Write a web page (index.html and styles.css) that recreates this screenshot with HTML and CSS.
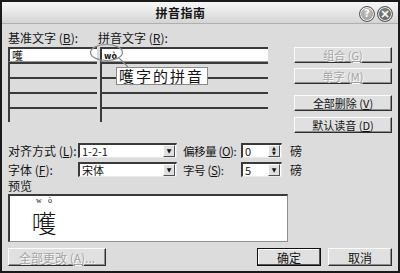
FILE: index.html
```html
<!DOCTYPE html>
<html lang="zh-CN">
<head>
  <meta charset="UTF-8" />
  <title>拼音指南</title>
  <link rel="stylesheet" href="styles.css">
</head>
<body>
  <div class="window">
    <div class="titlebar">
      <div class="title">拼音指南</div>
      <div class="title-buttons">
        <span class="tb-btn help">?</span>
        <span class="tb-btn close">×</span>
      </div>
    </div>

    <div class="content">
      <div class="top">
        <div class="pinyin-table">
          <div class="col-label">基准文字 (<u>B</u>):</div>
          <div class="col-label col-right">拼音文字 (<u>R</u>):</div>
          <div class="cell active base">嚄</div>
          <div class="cell active pinyin">wò</div>
          <div class="cell"></div>
          <div class="cell"></div>
          <div class="cell"></div>
          <div class="cell"></div>
          <div class="cell"></div>
          <div class="cell"></div>
          <div class="cell"></div>
          <div class="cell"></div>

          <!-- note drawn over the table -->
          <svg class="mark" width="260" height="92" viewBox="0 0 260 92">
            <ellipse cx="98.5" cy="21.5" rx="16" ry="8" fill="none" stroke="#8a8a8a" stroke-width="1.2" />
            <line x1="111" y1="27" x2="120" y2="36" stroke="#8a8a8a" stroke-width="1.2" />
          </svg>
          <div class="callout">嚄字的拼音</div>
        </div>

        <div class="side-buttons">
          <button class="btn" disabled>组合 (<u>G</u>)</button>
          <button class="btn btn-single" disabled>单字 (<u>M</u>)</button>
          <button class="btn btn-clear">全部删除 (<u>V</u>)</button>
          <button class="btn btn-default-read">默认读音 (<u>D</u>)</button>
        </div>
      </div>

      <div class="options">
        <div class="opt-row">
          <span class="opt-label">对齐方式 (<u>L</u>):</span>
          <div class="combo wide"><span class="combo-text">1-2-1</span><span class="drop">▼</span></div>
          <span class="opt-label second">偏移量 (<u>O</u>):</span>
          <div class="combo narrow"><span class="combo-text">0</span><span class="spin"><i>▲</i><i>▼</i></span></div>
          <span class="unit">磅</span>
        </div>
        <div class="opt-row">
          <span class="opt-label">字体 (<u>F</u>):</span>
          <div class="combo wide"><span class="combo-text">宋体</span><span class="drop">▼</span></div>
          <span class="opt-label second">字号 (<u>S</u>):</span>
          <div class="combo narrow"><span class="combo-text">5</span><span class="drop">▼</span></div>
          <span class="unit">磅</span>
        </div>
      </div>

      <div class="preview-label">预览</div>
      <div class="preview">
        <div class="sample">
          <span class="sample-py">w ò</span>
          <span class="sample-char">嚄</span>
        </div>
      </div>

      <div class="bottom">
        <button class="btn btn-all" disabled>全部更改 (<u>A</u>)...</button>
        <button class="btn btn-ok">确定</button>
        <button class="btn btn-cancel">取消</button>
      </div>
    </div>
  </div>
</body>
</html>
```

FILE: styles.css
```css
* {
  margin: 0;
  padding: 0;
  box-sizing: border-box;
}

body {
  width: 400px;
  height: 273px;
  background: #dcdcdc;
  font-family: "Noto Sans CJK SC", sans-serif;
  font-size: 12px;
  color: #151515;
  overflow: hidden;
}

u {
  text-decoration: underline;
}

.window {
  width: 400px;
  height: 273px;
  border: 2px solid #1a1a1a;
  background: #dcdcdc;
  display: flex;
  flex-direction: column;
}

/* title bar */
.titlebar {
  height: 22px;
  flex: none;
  display: flex;
  align-items: center;
  background: linear-gradient(#f8f8f8, #d4d4d4);
  border-bottom: 1px solid #b0b0b0;
}

.title {
  flex: 1;
  text-align: center;
  font-weight: bold;
  font-size: 12px;
  line-height: 14px;
  letter-spacing: 0.5px;
}

.title-buttons {
  display: flex;
  gap: 2px;
  padding-right: 5px;
  margin-top: 3px;
}

.tb-btn {
  width: 16px;
  height: 16px;
  border-radius: 50%;
  border: 1px solid #5a5a5a;
  box-shadow: inset 0 0 0 1px #f2f2f2;
  color: #fff;
  font-family: "DejaVu Sans", sans-serif;
  font-weight: bold;
  font-size: 10px;
  line-height: 14px;
  text-align: center;
}

.tb-btn.help {
  background: radial-gradient(circle at 50% 40%, #c4c4c4, #8e8e8e);
}

.tb-btn.close {
  background: radial-gradient(circle at 50% 40%, #8a8a8a, #4e4e4e);
  font-size: 12px;
}

/* main area */
.content {
  flex: 1;
  padding: 7px 6px 5px 6px;
  display: flex;
  flex-direction: column;
}

.top {
  display: flex;
  height: 102px;
}

.pinyin-table {
  position: relative;
  width: 260px;
  display: grid;
  grid-template-columns: 89px 168px;
  grid-template-rows: 16px repeat(5, 15px);
  column-gap: 3px;
  align-self: flex-start;
}

.col-label {
  font-size: 12px;
  line-height: 14px;
  white-space: nowrap;
}

.col-right {
  margin-left: -2px;
}

.cell {
  background: #dcdcdc;
  border-top: 2px solid #3a3a3a;
  border-left: 2px solid #3a3a3a;
}

.cell.active {
  background: #fff;
  border-bottom: 1px solid #9a9a9a;
  font-size: 11px;
  line-height: 12px;
  padding-left: 2px;
}

.cell.pinyin {
  font-family: "DejaVu Sans", sans-serif;
  font-size: 8px;
  font-weight: bold;
  padding-top: 2px;
}

.mark {
  position: absolute;
  left: 0;
  top: 0;
  pointer-events: none;
}

.callout {
  position: absolute;
  left: 108px;
  top: 36px;
  width: 92px;
  height: 18px;
  background: #fff;
  border: 1px solid #8a8a8a;
  font-size: 15px;
  line-height: 16px;
  letter-spacing: 2px;
  padding-left: 2px;
  white-space: nowrap;
}

.side-buttons {
  margin-left: auto;
  width: 98px;
  padding-top: 16px;
  display: flex;
  flex-direction: column;
}

.btn {
  height: 16px;
  width: 98px;
  background: #e0e0e0;
  border: 1px solid;
  border-color: #fbfbfb #2e2e2e #2e2e2e #fbfbfb;
  box-shadow: inset -1px -1px 0 #8e8e8e;
  font-family: "Noto Sans CJK SC", sans-serif;
  font-size: 11px;
  line-height: 13px;
  color: #151515;
  white-space: nowrap;
}

.btn:disabled {
  color: #a4a4a4;
  text-shadow: 1px 1px 0 #fafafa;
}

.btn-single {
  margin-top: 5px;
}

.btn-clear {
  margin-top: 11px;
}

.btn-default-read {
  margin-top: 6px;
}

/* alignment / font options */
.options {
  margin-top: 10px;
  display: flex;
  flex-direction: column;
  gap: 4px;
}

.opt-row {
  display: flex;
  align-items: center;
  height: 15px;
}

.opt-label {
  width: 70px;
  flex: none;
  line-height: 14px;
  white-space: nowrap;
}

.opt-label.second {
  width: 58px;
  margin-left: 6px;
  font-size: 11.5px;
  letter-spacing: -0.4px;
}

.combo {
  height: 15px;
  flex: none;
  background: #fff;
  border-top: 2px solid #3a3a3a;
  border-left: 2px solid #3a3a3a;
  border-bottom: 1px solid #e8e8e8;
  border-right: 1px solid #e8e8e8;
  display: flex;
  align-items: center;
}

.combo.wide {
  width: 99px;
}

.combo.narrow {
  width: 41px;
}

.combo-text {
  flex: 1;
  font-size: 11px;
  line-height: 12px;
  padding-left: 2px;
}

.drop,
.spin {
  width: 12px;
  height: 12px;
  margin-right: 1px;
  background: #e0e0e0;
  border: 1px solid;
  border-color: #fff #505050 #505050 #fff;
  font-family: "DejaVu Sans", sans-serif;
  font-size: 6px;
  line-height: 10px;
  text-align: center;
  color: #111;
}

.spin {
  display: flex;
  flex-direction: column;
  line-height: 5px;
  font-size: 5px;
}

.spin i {
  font-style: normal;
  height: 5px;
}

.unit {
  margin-left: 8px;
}

/* preview */
.preview-label {
  margin-top: 2px;
  height: 15px;
  line-height: 14px;
}

.preview {
  width: 280px;
  height: 48px;
  background: #fff;
  border-top: 2px solid #3a3a3a;
  border-left: 2px solid #3a3a3a;
  border-bottom: 1px solid #909090;
  border-right: 1px solid #909090;
  padding: 1px 0 0 21px;
}

.sample {
  width: 26px;
  display: flex;
  flex-direction: column;
  align-items: center;
  gap: 4px;
}

.sample-py {
  font-family: "Liberation Serif", serif;
  font-size: 8px;
  line-height: 7px;
  letter-spacing: 2px;
  padding-left: 2px;
}

.sample-char {
  font-size: 25px;
  line-height: 29px;
  font-weight: 300;
}

/* dialog buttons */
.bottom {
  margin-top: 6px;
  display: flex;
  gap: 7px;
}

.bottom .btn {
  height: 18px;
  font-size: 12px;
  line-height: 15px;
}

.btn-all {
  width: 98px;
  margin-right: auto;
}

.btn-ok,
.btn-cancel {
  width: 64px;
}

.btn-ok {
  border-color: #111;
  box-shadow: inset -1px -1px 0 #555, inset 1px 1px 0 #fff;
}
```
